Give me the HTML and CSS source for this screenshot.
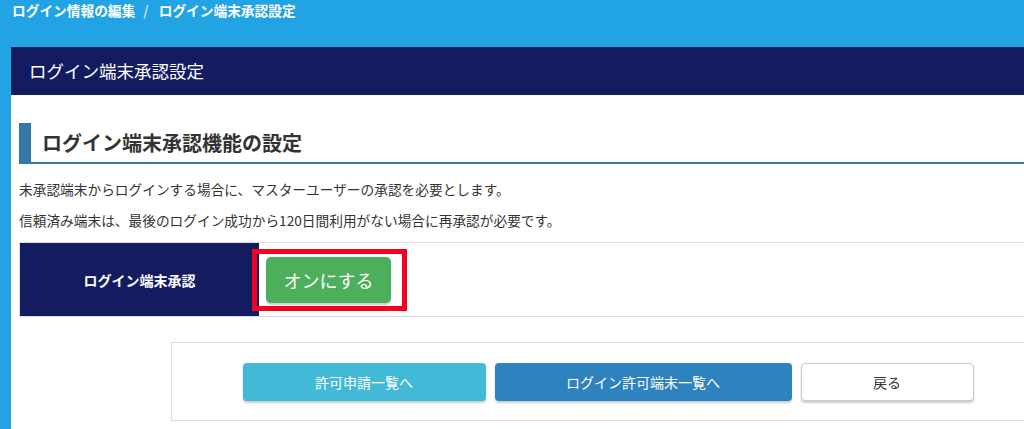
FILE: index.html
```html
<!DOCTYPE html>
<html lang="ja">
<head>
    <meta charset="UTF-8">
    <meta name="viewport" content="width=device-width, initial-scale=1.0">
    <title>ログイン端末承認設定</title>
    <link rel="stylesheet" href="styles.css">
</head>
<body>
    <!-- Breadcrumb -->
    <nav class="breadcrumb">
        <a href="#">ログイン情報の編集</a>
        <span class="sep">/</span>
        <span class="current">ログイン端末承認設定</span>
    </nav>

    <div class="panel">
        <div class="panel-heading">ログイン端末承認設定</div>

        <div class="panel-body">
            <h2 class="section-title">ログイン端末承認機能の設定</h2>
            <p class="note first">未承認端末からログインする場合に、マスターユーザーの承認を必要とします。</p>
            <p class="note">信頼済み端末は、最後のログイン成功から120日間利用がない場合に再承認が必要です。</p>

            <table class="setting-table">
                <tr>
                    <th>ログイン端末承認</th>
                    <td>
                        <span class="highlight">
                            <button class="btn btn-success">オンにする</button>
                        </span>
                    </td>
                </tr>
            </table>

            <div class="actions">
                <button class="btn btn-info">許可申請一覧へ</button>
                <button class="btn btn-primary">ログイン許可端末一覧へ</button>
                <button class="btn btn-default">戻る</button>
            </div>
        </div>
    </div>
</body>
</html>
```

FILE: styles.css
```css
/* General Styles */
body {
    font-family: "Noto Sans CJK JP", "Noto Sans", sans-serif;
    margin: 0;
    padding: 0;
    background: #22a3e3;
    color: #333;
    overflow: hidden;
}

/* Breadcrumb */
.breadcrumb {
    padding: 2px 12px 0;
    height: 45px;
    font-size: 13.7px;
    line-height: 16px;
    font-weight: bold;
    color: #fff;
}

.breadcrumb a {
    color: #fff;
    text-decoration: none;
}

.breadcrumb .sep {
    color: #c8e4f5;
    margin: 0 7px 0 5px;
}

/* Panel */
.panel {
    margin-left: 11px;
    width: 1200px;
    background: #fff;
    min-height: 400px;
}

.panel-heading {
    background: #131c60;
    color: #fff;
    height: 48px;
    line-height: 48px;
    padding-left: 18px;
    font-size: 17.5px;
}

.panel-body {
    padding: 28px 0 0 8px;
}

/* Section Title */
.section-title {
    margin: 0;
    height: 39px;
    line-height: 39px;
    padding-left: 11px;
    font-size: 20px;
    font-weight: bold;
    color: #333;
    border-left: 12px solid #3277a8;
    border-bottom: 2px solid #3277a8;
}

.note {
    margin: 0 0 13px;
    font-size: 13.7px;
    line-height: 18px;
}

.note.first {
    margin-top: 16px;
}

/* Setting Table */
.setting-table {
    width: 100%;
    border-collapse: collapse;
    border: 1px solid #ddd;
}

.setting-table th {
    width: 239px;
    height: 73px;
    padding: 0;
    background: #131c60;
    color: #fff;
    font-size: 14px;
    font-weight: bold;
    text-align: center;
}

.setting-table td {
    padding: 0 0 0 7px;
    text-align: left;
}

.highlight {
    position: relative;
    display: inline-block;
    vertical-align: middle;
}

.highlight::after {
    content: "";
    position: absolute;
    top: -8px;
    left: -14px;
    right: -16px;
    bottom: -8px;
    border: 5px solid #f5001e;
}

/* Buttons */
.btn {
    font-family: inherit;
    border: none;
    border-radius: 4px;
    cursor: pointer;
    color: #fff;
    font-size: 14px;
    box-shadow: 0 2px 2px rgba(0, 0, 0, 0.2);
}

.btn-success {
    display: block;
    width: 125px;
    height: 46px;
    background: #4caf5c;
    font-size: 18px;
    border-radius: 5px;
}

.actions {
    margin: 25px 0 0 152px;
    width: 872px;
    height: 77px;
    border: 1px solid #ddd;
    display: flex;
    justify-content: center;
    align-items: center;
    gap: 9px;
}

.actions .btn {
    height: 38px;
}

.btn-info {
    width: 243px;
    background: #42b9d6;
}

.btn-primary {
    width: 297px;
    background: #2e82be;
}

.btn-default {
    width: 173px;
    background: #fff;
    color: #333;
    border: 1px solid #ccc;
}
```
